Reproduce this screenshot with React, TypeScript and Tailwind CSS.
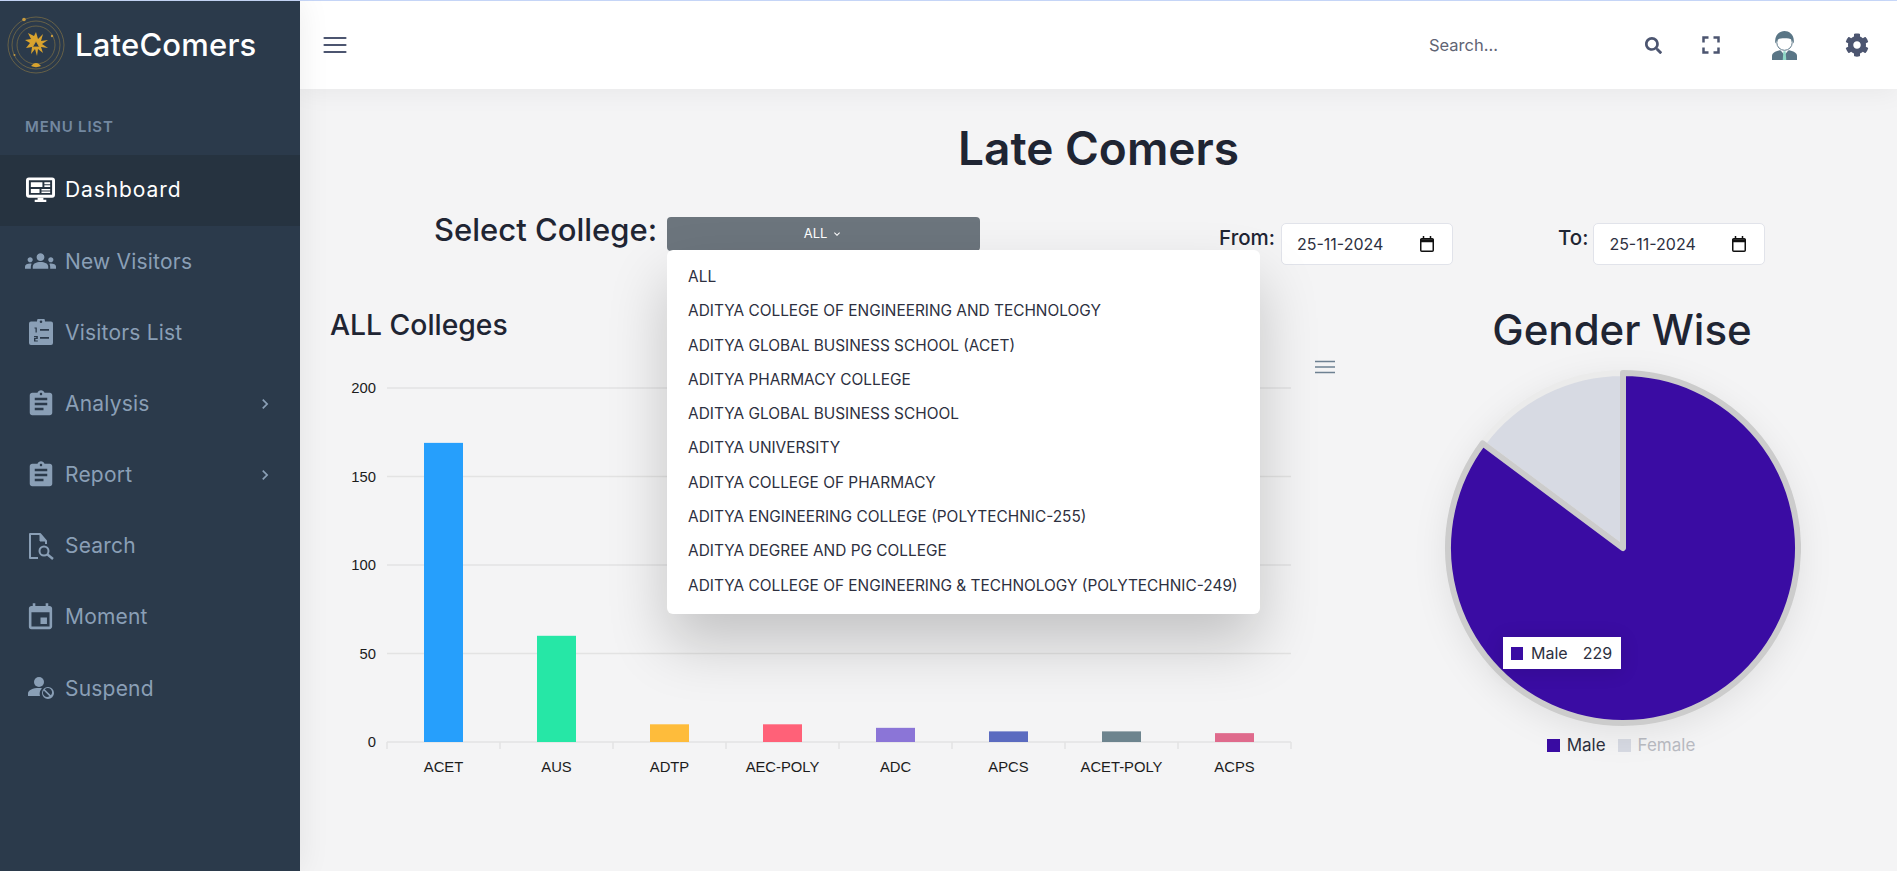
import React from 'react';
import { MdGroups, MdAssignment, MdEvent, MdChevronRight, MdKeyboardArrowDown, MdFullscreen } from 'react-icons/md';
import { FaSearch, FaCog } from 'react-icons/fa';

const colleges = [
  'ALL',
  'ADITYA COLLEGE OF ENGINEERING AND TECHNOLOGY',
  'ADITYA GLOBAL BUSINESS SCHOOL (ACET)',
  'ADITYA PHARMACY COLLEGE',
  'ADITYA GLOBAL BUSINESS SCHOOL',
  'ADITYA UNIVERSITY',
  'ADITYA COLLEGE OF PHARMACY',
  'ADITYA ENGINEERING COLLEGE (POLYTECHNIC-255)',
  'ADITYA DEGREE AND PG COLLEGE',
  'ADITYA COLLEGE OF ENGINEERING & TECHNOLOGY (POLYTECHNIC-249)',
];

const bars = [
  { label: 'ACET', value: 169, color: '#269ffc' },
  { label: 'AUS', value: 60, color: '#26e7a6' },
  { label: 'ADTP', value: 10, color: '#febc3b' },
  { label: 'AEC-POLY', value: 10, color: '#ff6178' },
  { label: 'ADC', value: 8, color: '#8b75d7' },
  { label: 'APCS', value: 6, color: '#5b6bc0' },
  { label: 'ACET-POLY', value: 6, color: '#6d848e' },
  { label: 'ACPS', value: 5, color: '#df6a8c' },
];

const MonitorIcon = () => (
  <svg width="29" height="26" viewBox="0 0 30 26" fill="currentColor">
    <path fillRule="evenodd" d="M3 0h24a3 3 0 0 1 3 3v15a3 3 0 0 1-3 3H3a3 3 0 0 1-3-3V3a3 3 0 0 1 3-3zm0 3v15h24V3z" />
    <path d="M5 5h12v5H5zM19 5h6v2h-6zM19 8h6v2h-6zM5 12h9v4H5zM16 12h9v1.500h-9zM16 14.500h9V16h-9zM12 21h6v2h3v2.500H9V23h3z" />
  </svg>
);

const NumberedClipboardIcon = () => (
  <svg width="24" height="26" viewBox="0 0 24 26" fill="currentColor">
    <path fillRule="evenodd" d="M2 2.500h6a4 4 0 0 1 8 0h6a2 2 0 0 1 2 2V24a2 2 0 0 1-2 2H2a2 2 0 0 1-2-2V4.500a2 2 0 0 1 2-2zM12 1.500a1.300 1.300 0 1 0 0 2.600 1.300 1.300 0 0 0 0-2.600zM5.500 8.500v1h1v4h1.300v-5zM5 17v1.200h2.300v.8H5v3.500h3.800v-1.100H6.400v-1.300h2.400V17zM11 10v1.800h9V10zM11 18v1.800h9V18z" />
  </svg>
);

const PageSearchIcon = () => (
  <svg width="26" height="27" viewBox="0 0 26 27" fill="none" stroke="currentColor" strokeWidth="2">
    <path d="M10 25H2V1h10l6 7v3" strokeLinejoin="round" />
    <path d="M12 1v7h6" fill="currentColor" strokeWidth="1" />
    <circle cx="16" cy="18" r="4.500" />
    <path d="M19.500 21.500 25 26" strokeWidth="2.400" />
  </svg>
);

const SuspendIcon = () => (
  <svg width="26" height="24" viewBox="0 0 26 24" fill="currentColor">
    <circle cx="11" cy="6" r="5" />
    <path d="M0 20v-2.500C0 14 5 12 11 12c1 0 2 .1 3 .2A8 8 0 0 0 12 20z" />
    <path fillRule="evenodd" d="M20 11a6 6 0 1 1 0 12 6 6 0 0 1 0-12zm-3.300 2.200 6.100 6.100a4.200 4.200 0 0 0-6.100-6.100zm-1 1.300a4.200 4.200 0 0 0 5.800 5.800z" />
  </svg>
);

const CalendarIcon = () => (
  <svg width="14" height="16" viewBox="0 0 14 16" fill="none" stroke="#111">
    <rect x="0.750" y="2.750" width="12.500" height="12.500" rx="1" strokeWidth="1.500" />
    <path d="M1 4h12v1.500H1z" fill="#111" strokeWidth="1.500" />
    <path d="M3.500 0v2.500M10.500 0v2.500" strokeWidth="1.500" />
  </svg>
);

const AvatarIcon = () => (
  <svg width="25" height="29" viewBox="0 0 26 30">
    <path d="M0 30v-4c0-3 3-5 8-6h10c5 1 8 3 8 6v4z" fill="#5a7686" />
    <path d="M8 19h10l-5 6z" fill="#fff" />
    <path d="M11.800 21h2.400l.6 9h-3.600z" fill="#8fd8c6" />
    <circle cx="13" cy="12" r="8" fill="#fff" stroke="#5a7686" />
    <path d="M3.500 13C2 4 8 0 13 0s11 4 9.500 13L20.500 9C18 7 8 7 5.500 9z" fill="#5a7686" />
  </svg>
);

const LogoMark = () => (
  <svg width="58" height="58" viewBox="0 0 58 58" fill="none" stroke="#8f7a45" strokeWidth="0.600">
    <circle cx="29" cy="29" r="28" />
    <circle cx="29" cy="29" r="24" />
    <circle cx="29" cy="29" r="19" />
    <circle cx="17" cy="3.500" r="1.800" fill="#c69a3e" stroke="none" />
    <circle cx="45" cy="20" r="1.200" fill="#c69a3e" stroke="none" />
    <circle cx="7.500" cy="39" r="1" fill="#c69a3e" stroke="none" />
    <path d="M29 16l2 7 5-5-2 7 7-1-6 4 6 4-7-1 2 6-5-4-1 7-2-7-4 5 1-7-6 1 4-5-5-3 6-1-3-6 6 3z" fill="#d9a32e" stroke="none" />
    <path d="M29 25l3.500 6h-7z" fill="#2c3a4b" stroke="#d9a32e" strokeWidth="0.800" />
    <path d="M24 50c2-2 3-3 5-3s3 1 5 3c-3 1.500-7 1.500-10 0z" fill="#d9a32e" stroke="none" />
  </svg>
);

const SideItem = ({ icon, label, active, arrow }: { icon: React.ReactNode; label: string; active?: boolean; arrow?: boolean }) => (
  <div className={`flex h-[71.200px] items-center pl-[25px] pr-[25px] ${active ? 'bg-[#263340] text-white' : 'text-[#8a9fb6]'}`}>
    <span className="flex w-[31px] justify-center">{icon}</span>
    <span className={`ml-[9px] text-[21px] ${active ? 'tracking-[0.900px]' : 'tracking-[0.200px]'}`}>{label}</span>
    {arrow && <MdChevronRight className="ml-auto text-[#8a9fb6]" size={20} />}
  </div>
);

const DateField = () => (
  <div className="flex h-[42px] w-[172px] items-center justify-between rounded-[5px] border border-[#e1e3ea] bg-white pl-[15px] pr-[18px] text-[16px] text-[#2d3040]">
    <span>25-11-2024</span>
    <CalendarIcon />
  </div>
);

const BarChart = () => {
  const base = 382;
  const left = 57;
  const step = 113;
  return (
    <svg width="1010" height="430" viewBox="0 0 1010 430" className="font-['Liberation_Sans',sans-serif]">
      {[200, 150, 100, 50, 0].map((tick) => {
        const y = base - tick * 1.77;
        return (
          <g key={tick}>
            <line x1={left} x2={left + step * 8} y1={y} y2={y} stroke="#e3e3e3" strokeWidth="1.500" />
            <text x={46} y={y + 5} textAnchor="end" fontSize="14.800" fill="#1c1c1c">{tick}</text>
          </g>
        );
      })}
      {Array.from({ length: 9 }).map((_, i) => (
        <line key={i} x1={left + step * i} x2={left + step * i} y1={base} y2={base + 7} stroke="#e3e3e3" strokeWidth="1.500" />
      ))}
      {bars.map((bar, i) => (
        <g key={bar.label}>
          <rect x={left + step * i + 37} y={base - bar.value * 1.77} width="39" height={bar.value * 1.77} fill={bar.color} />
          <text x={left + step * i + 56.500} y={base + 30} textAnchor="middle" fontSize="14.800" fill="#1c1c1c">{bar.label}</text>
        </g>
      ))}
    </svg>
  );
};

const PieChart = () => {
  const cx = 191;
  const cy = 184;
  const r = 175;
  const a = (-53.300 * Math.PI) / 180;
  const px = cx + r * Math.sin(a);
  const py = cy - r * Math.cos(a);
  return (
    <svg width="380" height="368" viewBox="0 0 380 368" className="drop-shadow-[0_8px_16px_rgba(0,0,0,0.08)]">
      <path d={`M${cx} ${cy}L${px} ${py}A${r} ${r} 0 0 1 ${cx} ${cy - r}Z`} fill="#d7dae3" stroke="#ebebeb" strokeWidth="6" strokeLinejoin="round" />
      <path d={`M${cx} ${cy}L${cx} ${cy - r}A${r} ${r} 0 1 1 ${px} ${py}Z`} fill="#3a0ca3" stroke="#cccccc" strokeWidth="6" strokeLinejoin="round" />
    </svg>
  );
};

export default function App() {
  return (
    <div className="flex h-[871px] w-[1897px] flex-col overflow-hidden bg-[#f4f4f5] font-['Inter',sans-serif] text-[#1f2533]">
      <div className="h-px bg-[#c9d9fb]" />
      <div className="flex min-h-0 flex-1">
        <aside className="z-20 flex w-[300px] shrink-0 flex-col bg-[#2b3a4b] shadow-[0_0_30px_rgba(0,0,0,0.08)]">
          <div className="flex h-[88px] items-center pl-[7px]">
            <LogoMark />
            <span className="ml-[10px] text-[31px] font-medium tracking-[0.200px] text-white">LateComers</span>
          </div>
          <div className="mt-[27px] pl-[25px] text-[15px] font-semibold tracking-[0.800px] text-[#7388a0]">MENU LIST</div>
          <nav className="mt-[16px]">
            <SideItem active icon={<MonitorIcon />} label="Dashboard" />
            <SideItem icon={<MdGroups size={34} />} label="New Visitors" />
            <SideItem icon={<NumberedClipboardIcon />} label="Visitors List" />
            <SideItem icon={<MdAssignment size={30} />} label="Analysis" arrow />
            <SideItem icon={<MdAssignment size={30} />} label="Report" arrow />
            <SideItem icon={<PageSearchIcon />} label="Search" />
            <SideItem icon={<MdEvent size={31} />} label="Moment" />
            <SideItem icon={<SuspendIcon />} label="Suspend" />
          </nav>
        </aside>

        <div className="flex min-w-0 flex-1 flex-col">
          <header className="z-10 flex h-[88px] shrink-0 items-center bg-white pl-[23px] pr-[28px] shadow-[0_4px_24px_rgba(0,0,0,0.05)]">
            <svg width="24" height="18" viewBox="0 0 24 18" stroke="#4c5570" strokeWidth="2.200" strokeLinecap="round">
              <path d="M1.500 2h21M1.500 9h21M1.500 16h21" />
            </svg>
            <span className="ml-auto text-[16.500px] text-[#5f6474]">Search...</span>
            <FaSearch className="ml-[147px] text-[#4c5570]" size={17} />
            <MdFullscreen className="ml-[34px] text-[#4c5570]" size={30} />
            <span className="ml-[46px]"><AvatarIcon /></span>
            <FaCog className="ml-[48px] text-[#4c5570]" size={24} />
          </header>

          <main className="relative min-h-0 flex-1">
            <h1 className="mt-[27px] text-center text-[46px] font-semibold leading-[64px] text-[#1f2533]">Late Comers</h1>

            <div className="relative mt-[37px] flex items-start pl-[134px]">
              <span className="text-[31px] font-medium leading-[26px]">Select College:</span>
              <div className="relative ml-[10px]">
                <div className="flex h-[34px] w-[313px] items-center justify-center gap-1 rounded-[4px] bg-[#6c757d] text-[13px] text-white">
                  ALL <MdKeyboardArrowDown size={12} />
                </div>
                <ul className="absolute left-0 top-[33px] z-30 w-[593px] rounded-[6px] bg-white pb-[11px] pl-[21px] pr-[15px] pt-[10px] text-[15.400px] leading-[34.300px] text-[#2d3040] shadow-[0_30px_60px_rgba(0,0,0,0.2)]">
                  {colleges.map((name) => (
                    <li key={name} className="whitespace-nowrap">{name}</li>
                  ))}
                </ul>
              </div>
              <div className="ml-[239px] mt-[6px] flex items-start">
                <span className="text-[20.500px] font-medium leading-[30px]">From:</span>
                <span className="ml-[6px]"><DateField /></span>
              </div>
              <div className="ml-[105px] mt-[6px] flex items-start">
                <span className="text-[20.500px] font-medium leading-[30px]">To:</span>
                <span className="ml-[5px]"><DateField /></span>
              </div>
            </div>

            <div className="mt-[40px] flex">
              <section className="relative w-[1122px] pl-[30px]">
                <h2 className="text-[28.300px] font-medium leading-[40px]">ALL Colleges</h2>
                <svg className="absolute left-[1015px] top-[55px]" width="20" height="14" viewBox="0 0 20 14" stroke="#6e8192" strokeWidth="1.500">
                  <path d="M0 1.500h20M0 7h20M0 12.500h20" />
                </svg>
                <div className="mt-[15px]"><BarChart /></div>
              </section>
              <section className="relative flex w-[400px] flex-col items-center">
                <h2 className="text-[42px] font-medium leading-[50px]">Gender Wise</h2>
                <div className="relative mt-[9px]">
                  <PieChart />
                  <div className="absolute left-[71px] top-[273px] flex h-[32px] w-[118px] items-center bg-white pl-[8px] text-[16px] text-[#2d3040] shadow-[0_2px_20px_rgba(0,0,0,0.12)]">
                    <span className="mr-[8px] h-[13px] w-[12px] bg-[#3a0ca3]" />
                    Male
                    <span className="ml-[15px]">229</span>
                  </div>
                </div>
                <div className="-ml-[2px] mt-[1px] flex items-center text-[17px]">
                  <span className="h-[13px] w-[13px] bg-[#3a0ca3]" />
                  <span className="ml-[7px] text-[#2d3040]">Male</span>
                  <span className="ml-[12px] h-[13px] w-[13px] bg-[#d7dae3]" />
                  <span className="ml-[7px] text-[#b9bbc2]">Female</span>
                </div>
              </section>
            </div>
          </main>
        </div>
      </div>
    </div>
  );
}
